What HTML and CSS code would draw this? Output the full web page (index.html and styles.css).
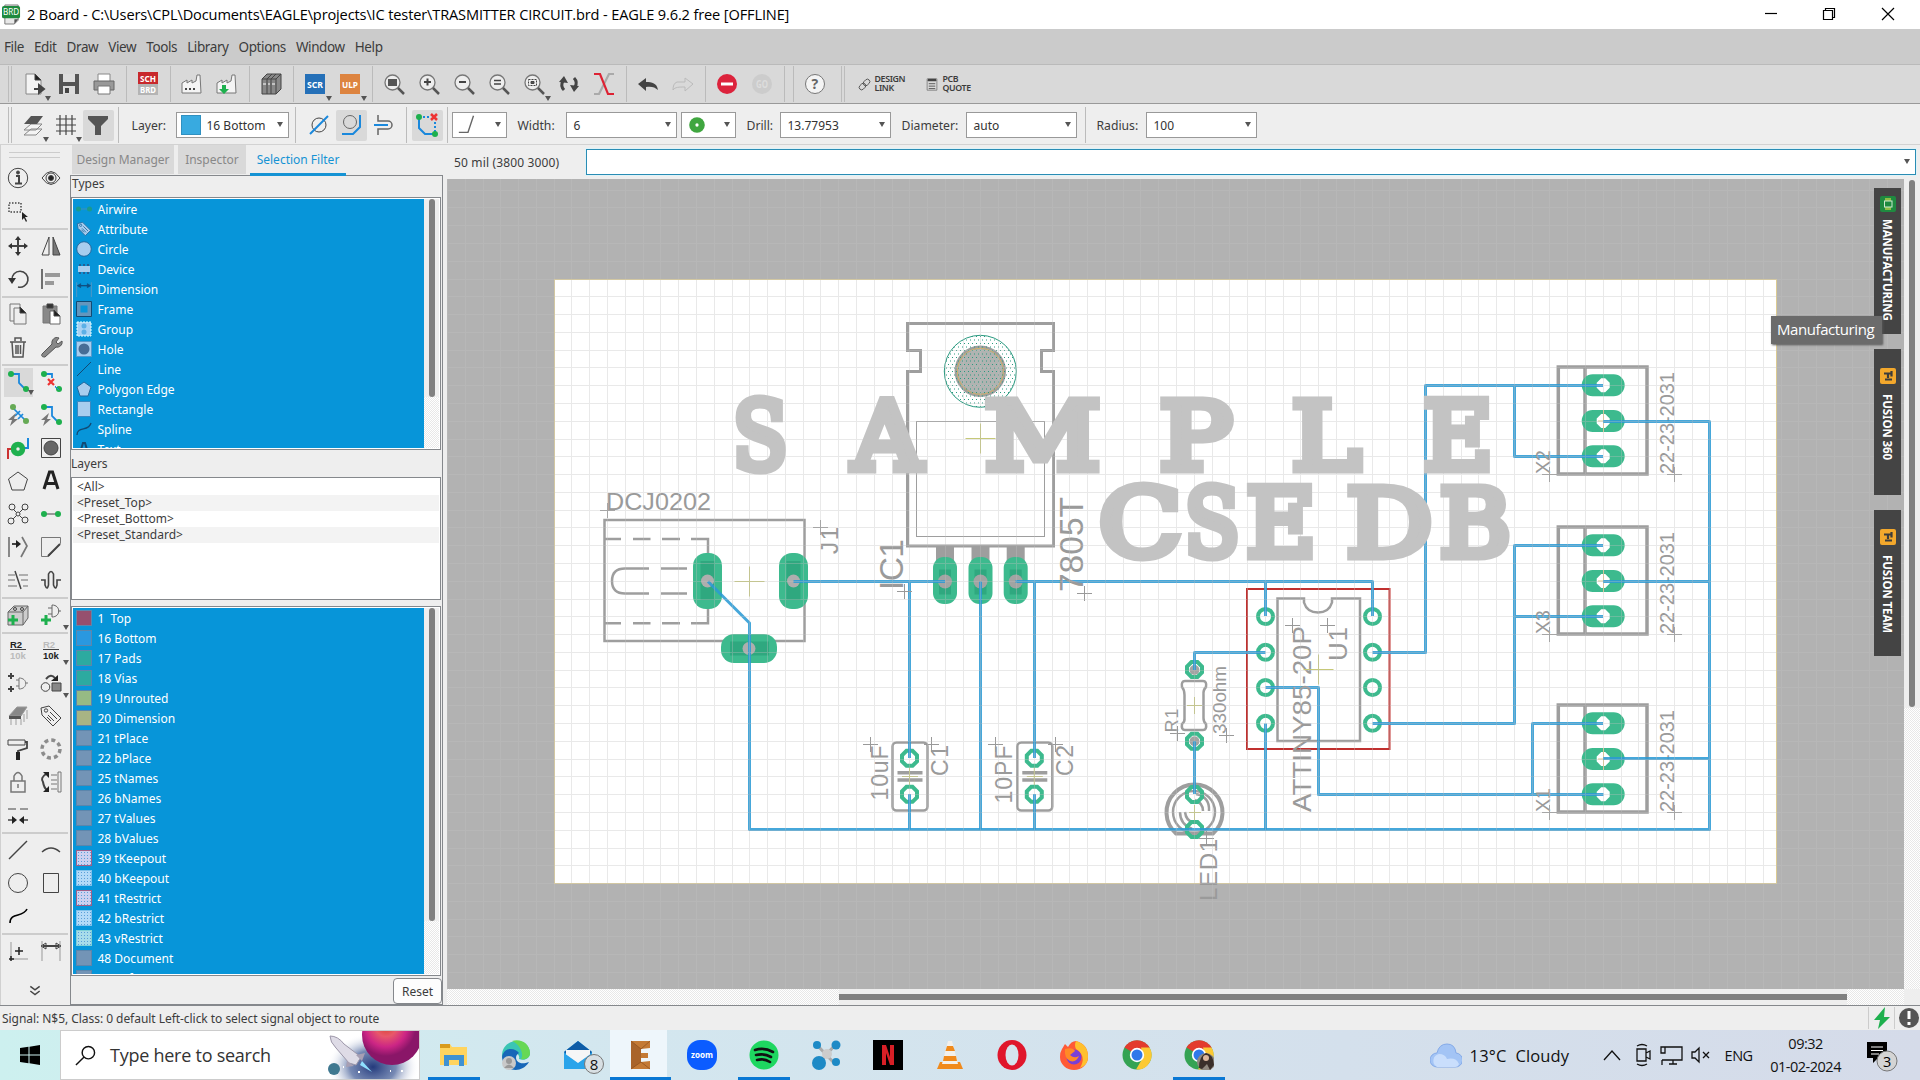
FILE: index.html
```html
<!DOCTYPE html>
<html lang="en">
<head>
<meta charset="utf-8">
<title>2 Board - EAGLE</title>
<link rel="stylesheet" href="styles.css">
</head>
<body>
<div class="app">
<header class="titlebar">
  <svg class="brd" viewBox="0 0 20 22"><path d="M3 1h14v16l-4 4H3z" fill="#e8e8e8" stroke="#777"/><path d="M17 16h-4v5z" fill="#555"/><rect width="19" height="13" y="2" rx="2" fill="#1e8a3e"/><text x="1" y="12" font-size="9" textLength="17" lengthAdjust="spacingAndGlyphs" fill="#fff">BRD</text></svg>
  <h1>2 Board - C:\Users\CPL\Documents\EAGLE\projects\IC tester\TRASMITTER CIRCUIT.brd - EAGLE 9.6.2 free [OFFLINE]</h1>
  <svg class="winctl" viewBox="0 0 150 28" fill="none" stroke="#000" stroke-width="1.2"><path d="M15 13.5h12"/><path d="M73.500 10.500h9v9h-9z M75.500 10.500v-2h9v9h-2"/><path d="M132 8l12 12M144 8l-12 12"/></svg>
</header>
<nav class="menubar"><span>File</span><span>Edit</span><span>Draw</span><span>View</span><span>Tools</span><span>Library</span><span>Options</span><span>Window</span><span>Help</span></nav>

<div class="toolbar main">
  <i class="grip"></i>
  <b class="dd"><svg viewBox="0 0 24 24"><path d="M4 2h9l6 6v14H4z" fill="#f4f4f4" stroke="#888"/><path d="M13 2v6h6z" fill="#222"/><path d="M12 17h8M17 13l5 4-5 4z" stroke-width="2" fill="#444"/></svg></b>
  <b><svg viewBox="0 0 24 24"><path d="M2 2h20v20H2z" fill="#555" stroke="none"/><path d="M6 2h12v8H6z M6 14h12v8H6z" fill="#ddd" stroke="none"/><path d="M8 16h4v5H8z" fill="#444" stroke="none"/></svg></b>
  <b><svg viewBox="0 0 24 24"><path d="M6 2h12v8H6z" fill="#fff" stroke="#888"/><path d="M2 9h20v9H2z" fill="#999" stroke="#666"/><path d="M6 14h12v8H6z" fill="#fff" stroke="#777"/></svg></b>
  <i class="sep"></i>
  <b><svg viewBox="0 0 24 24"><path d="M2 0h20v12H2z" fill="#c8282c" stroke="none"/><path d="M2 12h20v11H2z" fill="#b4b4b4" stroke="none"/><text class="tg" x="4" y="9.500" textLength="16" lengthAdjust="spacingAndGlyphs">SCH</text><text class="tg" x="4" y="21" textLength="16" lengthAdjust="spacingAndGlyphs">BRD</text></svg></b>
  <i class="sep"></i>
  <b><svg viewBox="0 0 24 24"><path d="M2 21V11l5-3v3l5-3v3l4-2 1-6h3l1 18z" fill="#f4f4f4" stroke="#777"/><path d="M5 17h12" stroke-dasharray="2 2" stroke-width="2"/></svg></b>
  <b><svg viewBox="0 0 24 24"><path d="M2 21V11l5-3v3l5-3v3l4-2 1-6h3l1 18z" fill="#f4f4f4" stroke="#777"/><path d="M7 13h4v4h3l-5 5-5-5h3z" fill="#1eb04e" stroke="none"/></svg></b>
  <i class="sep"></i>
  <b><svg viewBox="0 0 24 24"><path d="M3 7l5-5h14v15l-5 5H3z" fill="#888" stroke="#444"/><path d="M3 7h14v15M17 7l5-5M8 7v15M12 7v15M8 7l5-5M12 7l5-5" stroke="#444"/><path d="M4 12h3M9 12h2M13 12h3" stroke="#fff"/></svg></b>
  <i class="sep"></i>
  <b class="dd"><svg viewBox="0 0 24 24"><path d="M2 2h20v20H2z" fill="#2570b8" stroke="none"/><text class="tg" x="4" y="16" textLength="16" lengthAdjust="spacingAndGlyphs">SCR</text></svg></b>
  <b class="dd"><svg viewBox="0 0 24 24"><path d="M2 2h20v20H2z" fill="#dd8440" stroke="none"/><text class="tg" x="4" y="16" textLength="16" lengthAdjust="spacingAndGlyphs">ULP</text></svg></b>
  <i class="sep"></i>
  <b><svg viewBox="0 0 24 24"><use href="#lens"/><path d="M6 7h9v7H6z" fill="#555" stroke="none"/></svg></b>
  <b><svg viewBox="0 0 24 24"><use href="#lens"/><path d="M7 10h7M10.500 6.500v7" stroke-width="2"/></svg></b>
  <b><svg viewBox="0 0 24 24"><use href="#lens"/><path d="M7 10h7" stroke-width="2"/></svg></b>
  <b><svg viewBox="0 0 24 24"><use href="#lens"/><path d="M7 8.500h7M7 12h7" stroke-width="1.500"/></svg></b>
  <b class="dd"><svg viewBox="0 0 24 24"><use href="#lens"/><path d="M6.500 7.500h8v6h-8z" stroke-dasharray="2 1"/><path d="M9 9.500h3v2H9z" fill="#555"/></svg></b>
  <b><svg viewBox="0 0 24 24"><path d="M7 18a7.500 7.500 0 0 1-1-9M17 6a7.500 7.500 0 0 1 1 9" stroke-width="3"/><path d="M2 10l5-6 4 7zM22 14l-5 6-4-7z" fill="#444" stroke="none"/></svg></b>
  <b><svg viewBox="0 0 24 24" stroke-width="2.200"><path d="M22 2h-5L7 22H2" stroke="#aaa"/><path d="M2 2h6l8 20h6" stroke="#d23"/></svg></b>
  <i class="sep"></i>
  <b><svg viewBox="0 0 24 24"><path d="M2 12l8-6v4c6 0 11 1 12 8-3-3-7-4-12-3v4z" fill="#444" stroke="none"/></svg></b>
  <b><svg viewBox="0 0 24 24"><path d="M22 12l-8-6v4H6c-3 1-4 4-4 8 2-3 6-3 12-3v4z" stroke="#bbb"/></svg></b>
  <i class="sep"></i>
  <b><svg viewBox="0 0 24 24"><circle cx="12" cy="12" r="10" fill="#dc233c" stroke="none"/><path d="M6 12h12" stroke="#fff" stroke-width="3"/></svg></b>
  <b><svg viewBox="0 0 24 24"><circle cx="12" cy="12" r="10" fill="#ccc" stroke="none"/><text x="6" y="16" font-size="10" font-weight="bold" textLength="12" lengthAdjust="spacingAndGlyphs" fill="#ddd" stroke="none">GO</text></svg></b>
  <i class="sep"></i><i class="sep"></i>
  <b><svg viewBox="0 0 24 24"><circle cx="12" cy="12" r="9.500" fill="#f4f4f4" stroke="#777"/><text x="8.500" y="17" font-size="14" font-weight="bold" fill="#666" stroke="none">?</text></svg></b>
  <i class="grip g2"></i>
  <svg class="tiny" viewBox="0 0 16 16"><g transform="rotate(-45 8 8)"><rect x="0" y="5" width="9" height="6" rx="3"/><rect x="7" y="5" width="9" height="6" rx="3"/></g></svg><span class="two">DESIGN<br>LINK</span>
  <svg class="tiny pq" viewBox="0 0 16 16"><path d="M2 1h12v14H2z M2 3h12" stroke="#777"/><path d="M3 2.500h10" stroke-width="3"/><path d="M4 7h8M4 10h8M4 13h8"/></svg><span class="two">PCB<br>QUOTE</span>
</div>

<div class="toolbar params">
  <i class="grip"></i>
  <b class="dd w33"><svg viewBox="0 0 24 24"><path d="M3 22l7-6h11l-6 6z M3 17l7-6h11l-6 6z" fill="#f4f4f4" stroke="#888"/><path d="M3 11l7-8h12l-6 8z" fill="#555" stroke="none"/></svg></b>
  <b class="dd w33"><svg viewBox="0 0 24 24"><path d="M2 6h20M2 12h20M2 18h20M6 2v20M12 2v20M18 2v20" stroke="#444" stroke-width="1.200"/></svg></b>
  <b class="on"><svg viewBox="0 0 24 24"><path d="M2 3h20v3l-7 7v9H9v-9L2 6z" fill="#555" stroke="none"/></svg></b>
  <i class="sep"></i><label class="l1">Layer:</label>
  <div class="combo c1"><em></em>16 Bottom</div>
  <i class="sep s2"></i>
  <b><svg viewBox="0 0 24 24"><circle cx="12" cy="12" r="7"/><path d="M3 21L21 3" stroke="#1a88dc" stroke-width="2"/></svg></b>
  <b class="on"><svg viewBox="0 0 24 24"><circle cx="11" cy="9" r="6.500" stroke="#666"/><path d="M3 21h11l7-7V2" stroke="#1a88dc" stroke-width="2"/></svg></b>
  <b><svg viewBox="0 0 24 24"><path d="M6 2v6h10a4 4 0 0 1 0 8H6v6" stroke="#666" stroke-width="1.500"/><path d="M2 12h14" stroke="#1a88dc" stroke-width="2"/></svg></b>
  <i class="sep s3"></i>
  <b class="on"><svg viewBox="0 0 24 24"><path d="M4 4v11l6 6h10" stroke="#1a88dc" stroke-width="2"/><path d="M8 4h6M20 9v10" stroke="#1a88dc" stroke-width="2" stroke-dasharray="2 2"/><path d="M16 1l6 6M22 1l-6 6" stroke="#e33" stroke-width="2.500"/><circle cx="4" cy="4" r="3" fill="#1eb04e" stroke="none"/><circle cx="20" cy="21" r="3" fill="#1eb04e" stroke="none"/></svg></b>
  <i class="sep s4"></i>
  <div class="combo c2"><svg viewBox="0 0 24 24"><path d="M2 20h10l6-18" stroke="#666" stroke-width="1.500"/></svg></div><label class="l2">Width:</label>
  <div class="combo c3">6</div>
  <div class="combo c4"><svg viewBox="0 0 24 24"><circle cx="12" cy="12" r="8.500" fill="#3fa63f" stroke="none"/><circle cx="12" cy="12" r="1.800" fill="#fff" stroke="none"/></svg></div>
  <label class="l3">Drill:</label><div class="combo c3">13.77953</div>
  <label class="l4">Diameter:</label><div class="combo c3">auto</div>
  <i class="sep s5"></i><label class="l5">Radius:</label><div class="combo c3">100</div>
</div>

<main class="work">
<aside class="palette">
  <i class="pgrip"></i>
  <b><svg viewBox="0 0 24 24"><circle cx="12" cy="12" r="9.700"/><path d="M10 10h3v7M9 17.500h7" stroke-width="2"/><circle cx="12" cy="6.500" r="1.500" fill="#444"/></svg></b>
  <b><svg viewBox="0 0 24 24"><path d="M3 12q9-13 18 0-9 13-18 0z"/><circle cx="12" cy="12" r="5"/><circle cx="12" cy="12" r="2.500" fill="#222"/></svg></b>
  <b><svg viewBox="0 0 24 24"><path d="M3 4h12v9H3z" stroke-dasharray="1.500 1.500" stroke-width="1.500"/><path d="M16 13v8l2-2 2 4 1-1-2-4h3z" fill="#222" stroke="none"/></svg></b><b></b>
  <hr>
  <b><svg viewBox="0 0 24 24"><path d="M12 4v16M4 12h16" stroke-width="2"/><path d="M12 2l3 4H9zM12 22l3-4H9zM2 12l4-3v6zM22 12l-4-3v6z" fill="#333" stroke="none"/></svg></b>
  <b><svg viewBox="0 0 24 24"><path d="M10 3v18H3z"/><path d="M14 3v18h7z" fill="#777"/></svg></b>
  <b><svg viewBox="0 0 24 24"><path d="M6 13a8 8 0 1 1 6 7" stroke-width="1.600"/><path d="M2 11h8l-4 6z" fill="#333" stroke="none"/></svg></b>
  <b><svg viewBox="0 0 24 24"><path d="M3 2v20" stroke-width="1.500"/><path d="M6 8h15M6 16h9" stroke="#999" stroke-width="4"/></svg></b>
  <hr>
  <b><svg viewBox="0 0 24 24"><path d="M4 2h10v4M4 2v17h4M8 6h7l5 5v11H8z" stroke="#777"/><path d="M14 5v6h6z" fill="#222"/></svg></b>
  <b><svg viewBox="0 0 24 24"><path d="M4 4h14v17H4z" fill="#888" stroke="#777"/><path d="M8 2h6v4H8z" fill="#333"/><path d="M11 9h5l5 5v8H11z" fill="#fff" stroke="#666"/><path d="M15 8v6h6z" fill="#222"/></svg></b>
  <b><svg viewBox="0 0 24 24"><path d="M4 7h16M6 7l1 15h10l1-15M9 6V3h6v3M10 10v9M12 10v9M14.500 10v9" stroke-width="1.500" stroke="#555"/></svg></b>
  <b><svg viewBox="0 0 24 24"><path d="M3 19L13 9c-1-4 3-8 7-6l-3 4 2 2 4-3c1 4-3 7-6 6L6 22c-3 0-4-1-3-3z" fill="#888" stroke="#555"/></svg></b>
  <hr>
  <b class="on dd"><svg viewBox="0 0 24 24"><use href="#rt"/></svg></b>
  <b><svg viewBox="0 0 24 24"><use href="#rt"/><path d="M8 8h10v9H8z" fill="#eee" stroke="none"/><path d="M9 9l6 6M15 9l-6 6" stroke="#e33" stroke-width="2.200"/><path d="M16 16l4 4" stroke="#1a88dc"/></svg></b>
  <b><svg viewBox="0 0 24 24"><path d="M7 5l13 13M9 13l5-5M12 16l5-5" stroke="#1a88dc" stroke-width="1.700"/><circle cx="7" cy="4" r="3" fill="#6a5" stroke="none"/><circle cx="20" cy="18" r="3" fill="#6a5" stroke="none"/><use href="#bolt"/></svg></b>
  <b><svg viewBox="0 0 24 24"><use href="#rt"/><use href="#bolt"/></svg></b>
  <b><svg viewBox="0 0 24 24"><path d="M2 23V13h7" stroke="#c33" stroke-width="2"/><path d="M22 2v10h-6" stroke="#1a88dc" stroke-width="2"/><circle cx="12" cy="13" r="4.500" stroke="#1eb04e" stroke-width="5.500"/></svg></b>
  <b><svg viewBox="0 0 24 24"><path d="M2.500 2.500h19v19h-19z"/><circle cx="12" cy="12" r="7" fill="#666"/></svg></b>
  <b><svg viewBox="0 0 24 24"><path d="M12 3l9.500 7-3.500 11H6L2.500 10z"/></svg></b>
  <b><svg viewBox="0 0 24 24"><path d="M5 20L10.500 3h3L19 20M7.500 14.500h9" stroke="#222" stroke-width="3"/></svg></b>
  <b><svg viewBox="0 0 24 24" stroke="#666"><path d="M5 5l14 14M19 5L5 19"/><g fill="#eee"><circle cx="6" cy="5" r="3"/><circle cx="19" cy="5" r="3"/><circle cx="5" cy="19" r="3"/><circle cx="19" cy="18" r="3"/><circle cx="12" cy="12" r="2"/></g></svg></b>
  <b><svg viewBox="0 0 24 24"><path d="M4 12h16" stroke="#999" stroke-width="2"/><circle cx="5" cy="12" r="3" fill="#1eb04e" stroke="none"/><circle cx="19" cy="12" r="3" fill="#1eb04e" stroke="none"/></svg></b>
  <b><svg viewBox="0 0 24 24"><path d="M3 2v20M16 2l5 9-6 11" stroke="#777" stroke-width="1.700"/><path d="M6 9h6" stroke-width="2"/><path d="M10 5l5 4-5 4z" fill="#222" stroke="none"/></svg></b>
  <b><svg viewBox="0 0 24 24"><path d="M2.500 2.500h19v6l-12 13h-7z" stroke="#777"/><path d="M9 21L21 9" stroke-width="2"/></svg></b>
  <b><svg viewBox="0 0 24 24"><path d="M2 7h7M2 12h7M2 18h9M13 7h9M15 12h7M17 18h5" stroke="#999" stroke-width="1.700"/><path d="M9 3l6 18" stroke-width="1.500"/></svg></b>
  <b><svg viewBox="0 0 24 24"><path d="M2 12h4v5q2 6 3.500 0V6q2.500-5 5 0v11q2 6 3.500 0v-5h4" stroke-width="1.600"/></svg></b>
  <hr>
  <b><svg viewBox="0 0 24 24"><path d="M2 9l6-6h14v12l-5 7H2z" fill="#ccc" stroke="#666"/><path d="M17 9h-15M17 22V9l5-6" stroke="#666"/><circle cx="9" cy="6" r="1.500"/><circle cx="16" cy="6" r="1.500"/><use href="#plus"/></svg></b>
  <b class="dd"><svg viewBox="0 0 24 24"><path d="M13 2v12c9 0 9-12 0-12zM9 5h4M9 11h4M19 8h3" stroke="#666"/><use href="#plus"/></svg></b>
  <hr>
  <b><svg viewBox="0 0 24 24"><text class="r2" x="4" y="10" fill="#222">R2</text><text class="r2" x="4" y="21" fill="#bbb">10k</text><path d="M4 11.500h16"/></svg></b>
  <b class="dd"><svg viewBox="0 0 24 24"><text class="r2" x="4" y="10" fill="#bbb">R2</text><text class="r2" x="4" y="21" fill="#222">10k</text><path d="M4 11.500h16"/></svg></b>
  <b><svg viewBox="0 0 24 24"><path d="M2 5h6M5 2v6M2 18h6M5 15v6" stroke-width="2"/><path d="M13 7v11c9 0 9-11 0-11zM10 9h3M10 15h3M19 12h3" stroke="#777"/></svg></b>
  <b class="dd"><svg viewBox="0 0 24 24"><circle cx="6.500" cy="16" r="4.300"/><path d="M13 12h9v8h-9z" fill="#888"/><path d="M7 8q5-6 9-1" stroke-width="2"/><path d="M19 4v6h-7z" fill="#222" stroke="none"/></svg></b>
  <b><svg viewBox="0 0 24 24"><path d="M3 12l8-9h10l-6 9z" fill="#888" stroke="#999"/><path d="M3 12h12v3H3z" fill="#555" stroke="none"/><path d="M5 15v6M10 15v6M15 15v6M18 10v8M21 6v9" stroke="#bbb" stroke-width="1.500"/></svg></b>
  <b><svg viewBox="0 0 24 24"><use href="#tag"/></svg></b>
  <b><svg viewBox="0 0 24 24"><path d="M2 3h17v5H2z"/><path d="M19 5h2v6l-9 3v2" stroke-width="1.800"/><path d="M12 15v8" stroke="#222" stroke-width="4"/></svg></b>
  <b><svg viewBox="0 0 24 24"><circle cx="12" cy="12" r="9" stroke="#8c8c8c" stroke-width="3.500" stroke-dasharray="4 3.070"/></svg></b>
  <b><svg viewBox="0 0 24 24"><path d="M5 11h14v11H5zM8 11V6q4-7 8 0v5M12 14v4" stroke="#777" stroke-width="1.500"/></svg></b>
  <b><svg viewBox="0 0 24 24"><path d="M7 4q-6 4-3 8 1 6 4 8" stroke-width="2"/><path d="M4 2h6v6zM4 22h6v-6z" fill="#222" stroke="none"/><path d="M19 2h3v20h-3zM12 5h6M12 10h6M12 14h6M12 19h6" stroke="#777"/></svg></b>
  <b><svg viewBox="0 0 24 24"><path d="M2 6h8M14 6h8" stroke="#999" stroke-width="2"/><path d="M2 17h6M16 17h6" stroke-width="1.500"/><path d="M6 13l5 4-5 4zM18 13l-5 4 5 4z" fill="#222" stroke="none"/></svg></b><b></b>
  <hr>
  <b><svg viewBox="0 0 24 24"><path d="M3 21L21 3" stroke-width="1.400"/></svg></b>
  <b><svg viewBox="0 0 24 24"><path d="M3 14q9-8 18 0" stroke-width="1.400"/></svg></b>
  <b><svg viewBox="0 0 24 24"><circle cx="12" cy="12" r="9.500"/></svg></b>
  <b><svg viewBox="0 0 24 24"><path d="M4.500 2.500h15v19h-15z"/></svg></b>
  <b><svg viewBox="0 0 24 24"><path d="M4 19c0-11 13-5 17-14" stroke="#000" stroke-width="1.600"/></svg></b><b></b>
  <hr>
  <b><svg viewBox="0 0 24 24"><path d="M5 3v17h17" stroke="#999"/><path d="M9 12h8M13 8v8M3 20h5M5 17v5" stroke="#222" stroke-width="1.500"/></svg></b>
  <b><svg viewBox="0 0 24 24"><path d="M3 2v20M21 2v20" stroke="#999"/><use href="#dim"/></svg></b>
  <svg class="chev" viewBox="0 0 12 10"><path d="M2 1l4 3 4-3M2 5l4 3 4-3" stroke-width="1.300"/></svg>
</aside>

<section class="panel">
  <div class="tabs"><span class="t1">Design Manager</span><span class="t2">Inspector</span><span class="t3">Selection Filter</span></div>
  <div class="pbody">
    <div class="cap">Types</div>
    <div class="list types">
      <ul>
        <li><svg viewBox="0 0 16 16"><path d="M3 8h10" stroke="#3f8fb8"/><circle cx="2.500" cy="8" r="2.500" fill="#1a9a8c"/><circle cx="13.500" cy="8" r="2.500" fill="#1a9a8c"/></svg>Airwire</li>
        <li><svg viewBox="0 0 24 24"><g fill="#a8cdee" stroke="#24699e" stroke-width="1.300"><use href="#tag"/></g></svg>Attribute</li>
        <li><svg viewBox="0 0 16 16"><circle cx="8" cy="8" r="7.300" fill="#a8cdee" stroke="#24699e"/></svg>Circle</li>
        <li><svg viewBox="0 0 16 16"><path d="M4 3v10M8 3v10M12 3v10" stroke="#235f96" stroke-width="2"/><path d="M2 5h12v6H2z" fill="#a8cdee"/></svg>Device</li>
        <li><svg viewBox="0 0 24 24"><path d="M1 2v22M23 2v22" stroke="#4f97c6" stroke-width="1.500"/><g stroke="#114f80" fill="#114f80"><use href="#dim"/></g></svg>Dimension</li>
        <li><svg viewBox="0 0 16 16"><path d="M2.500 2.500h11v11h-11z" stroke="#6496bd" stroke-width="4"/><path d="M.5 .5h15v15H.5z" stroke="#124a74"/></svg>Frame</li>
        <li><svg viewBox="0 0 16 16"><path d="M1 1h14v14H1z" fill="#a8d2f4" stroke="#dff" stroke-dasharray="2 1"/><circle cx="8" cy="5" r="2.500" fill="#5cb0e6"/><circle cx="8" cy="11" r="2.500" fill="#5cb0e6"/></svg>Group</li>
        <li><svg viewBox="0 0 16 16"><path d="M.5 .5h15v15H.5z" fill="#a8cdee" stroke="#5599cc"/><circle cx="8" cy="8" r="5.500" fill="#476d96"/></svg>Hole</li>
        <li><svg viewBox="0 0 16 16"><path d="M1 15L15 1" stroke="#124a74"/></svg>Line</li>
        <li><svg viewBox="0 0 16 16"><path d="M8 1l7 5-3 9H4L1 6z" fill="#a8cdee" stroke="#24699e"/></svg>Polygon Edge</li>
        <li><svg viewBox="0 0 16 16"><path d="M1.500 .5h13v15h-13z" fill="#a8cdee" stroke="#3c88c0"/></svg>Rectangle</li>
        <li><svg viewBox="0 0 16 16"><path d="M1 14c0-9 12-3 14-12" stroke="#124a74" stroke-width="1.300"/></svg>Spline</li>
        <li><svg viewBox="0 0 16 16"><path d="M3 15L7 2h2l4 13" stroke="#124a74" stroke-width="2"/></svg>Text</li>
      </ul>
      <div class="sb"></div>
    </div>
    <div class="cap c-lay">Layers</div>
    <div class="presets"><p>&lt;All&gt;</p><p>&lt;Preset_Top&gt;</p><p>&lt;Preset_Bottom&gt;</p><p>&lt;Preset_Standard&gt;</p></div>
    <div class="list layers">
      <ul>
        <li><em class="top"></em>1&nbsp; Top</li><li><em class="bot"></em>16 Bottom</li><li><em class="pad"></em>17 Pads</li><li><em class="pad"></em>18 Vias</li><li><em class="unr"></em>19 Unrouted</li><li><em class="dmn"></em>20 Dimension</li><li><em></em>21 tPlace</li><li><em></em>22 bPlace</li><li><em></em>25 tNames</li><li><em></em>26 bNames</li><li><em></em>27 tValues</li><li><em></em>28 bValues</li><li><em class="dots rd"></em>39 tKeepout</li><li><em class="dots"></em>40 bKeepout</li><li><em class="dots rd"></em>41 tRestrict</li><li><em class="dots"></em>42 bRestrict</li><li><em class="dots gr"></em>43 vRestrict</li><li><em></em>48 Document</li><li><em></em>49 Reference</li>
      </ul>
      <div class="sb"></div>
    </div>
    <button class="reset">Reset</button>
  </div>
</section>

<section class="editor">
  <div class="cmd"><span>50 mil (3800 3000)</span><div class="combo input"></div></div>
  <div class="stage">
  <svg class="board" viewBox="447 179 1457 810">
    <defs>
      <pattern id="dot" width="4" height="7" patternUnits="userSpaceOnUse"><path d="M0 0h1v1H0zM2 3.500h1v1H2z" fill="#2a9a80"/></pattern>
      <g id="x"><path d="M-7.500 0h15M0-7.500v15" stroke="#999" stroke-width="1" fill="none"/></g>
      <g id="y"><path d="M-15 0h30M0-15v30" stroke="#c6c878" stroke-width="1" fill="none"/></g>
      <g id="ring"><circle r="7.500" fill="none" stroke="#3dba8e" stroke-width="4"/></g>
      <g id="oct"><path d="M-3-7.500h6L7.500-3v6L3 7.500h-6L-7.500 3v-6z" fill="none" stroke="#3dba8e" stroke-width="4"/></g>
      <g id="cpad"><path fill-rule="evenodd" d="M-10.500-11h21a11 11 0 0 1 0 22h-21a11 11 0 0 1 0-22zM-2-7L-6.500-2.500v5l4.500 4.500h4L6.500 2.500v-5L2-7z" fill="#3dba8e"/></g>
      <g id="conn">
        <g fill="none" stroke="#9e9e9e" stroke-width="3.500"><rect x="1558.300" y="367" width="88.700" height="107"/><path d="M1585 367v107"/></g>
        <use href="#cpad" x="1603.200" y="385.300"/><use href="#cpad" x="1603.200" y="421"/><use href="#cpad" x="1603.200" y="456.300"/>
        <path d="M1598 421h10M1603.500 410v22" stroke="#dcc98a" fill="none"/>
        <text class="v" font-size="20" textLength="102" transform="translate(1673.500 474)rotate(-90)">22-23-2031</text>
        <use href="#x" x="1549.500" y="474.500"/><use href="#x" x="1674.500" y="474.500"/>
      </g>
      <g id="cap">
        <rect x="892.500" y="742.500" width="35" height="68" rx="4" fill="none" stroke="#9e9e9e" stroke-width="2.500"/>
        <path d="M897.500 772.700h25M897.500 780h25" stroke="#9e9e9e" stroke-width="3.500"/><path d="M902 776.500h16M909.500 766v20" stroke="#c6c878"/>
        <use href="#oct" x="909.500" y="758.300"/><use href="#oct" x="909.500" y="794.300"/>
      </g>
      <g id="lead"><path d="M-9-36H9v20H-9z" fill="#9e9e9e"/><rect x="-12" y="-24.500" width="24" height="47" rx="11" fill="#3dba8e"/><path d="M-6-12H6v25H-6z" fill="#2fa87f"/><circle r="7" fill="#a2a4a3"/></g>
      <g id="jpad"><rect x="-14.500" y="-28" width="29" height="56" rx="13" fill="#3dba8e"/><path d="M-7-20H7v39H-7z" fill="#2fa87f"/><circle r="6.500" fill="#aeaeae"/></g>
    </defs>
    <rect x="447" y="179" width="1457" height="810" fill="#b2b2b2"/>
    <rect x="554.500" y="279.500" width="1222" height="604" fill="#fff" stroke="#dccb92"/>
    <g fill="none" stroke="#9e9e9e" stroke-width="2.500">
      <rect x="604.500" y="520" width="200" height="121"/>
      <path d="M604 539h17M633 539h17.500M662 539h18M691 539h17v18M604 623.300h17M633 623.300h17.500M662 623.300h18M691 623.300h17v-20M649 568.500h-24q-13 0-13 12.500t13 12.500h24M661 568.500h26M661 593.500h26"/>
      <path stroke-width="3" d="M907.500 323.500h146v27h-12v21h12v174.500h-146v-174.500h13v-21h-13z"/>
      <rect x="916.500" y="421.500" width="128" height="115" stroke-width="1"/>
      <path d="M1304 598.500h-26.500v142.500h82.500v-142.500h-28v4q-3 10-14 10t-14-10z"/>
    </g>
    <rect x="1247" y="589" width="142.500" height="160" fill="none" stroke="#c0302f" stroke-width="2"/>
    <g><circle cx="980.300" cy="371.300" r="24" fill="#b0b3b1" stroke="#9e9e9e" stroke-width="3.500"/><circle cx="980.300" cy="371.300" r="23" fill="none" stroke="#d1b36a"/><circle cx="980.300" cy="371.300" r="36" fill="url(#dot)" stroke="#2a9a80"/></g>
    <g fill="none" stroke="#9e9e9e" stroke-width="2.500">
      <path d="M1185 681h18q4 0 3 6-3 3-2.500 8v23q0 4 2.500 6 1 6-3 6h-18q-4 0-3-6 3-2 2.500-6v-23q0-5-2.500-8-1-6 3-6z"/>
      <path d="M1176 833.500a28 28 0 1 1 37 0z" stroke-width="4"/><circle cx="1194" cy="812" r="21"/>
      <path d="M1196 794q14 3 13 17M1195 800q8 3 8 11M1180 812q0 12 12 17M1185 812q1 9 9 11"/>
    </g>
    <use href="#jpad" x="707.500" y="581"/><use href="#jpad" x="793.500" y="581"/><use href="#jpad" transform="translate(749 648.500)rotate(90)"/>
    <use href="#lead" x="945" y="581.500"/><use href="#lead" x="980.500" y="581.500"/><use href="#lead" x="1015.700" y="581.500"/>
    <use href="#conn"/><use href="#conn" y="160"/><use href="#conn" y="338"/>
    <use href="#cap"/><use href="#cap" x="124.800"/>
    <use href="#ring" x="1265.500" y="616.500"/><use href="#ring" x="1265.500" y="652.300"/><use href="#ring" x="1265.500" y="687.500"/><use href="#ring" x="1265.500" y="723.300"/>
    <use href="#ring" x="1372.500" y="616.500"/><use href="#ring" x="1372.500" y="652.300"/><use href="#ring" x="1372.500" y="687.500"/><use href="#ring" x="1372.500" y="723.300"/>
    <g fill="#a2a4a3"><circle cx="1194.500" cy="670" r="5"/><circle cx="1194.500" cy="741.300" r="5"/></g>
    <use href="#oct" x="1194.500" y="669.500"/><use href="#oct" x="1194.500" y="741.300"/><use href="#oct" x="1194.500" y="794.500"/><use href="#oct" x="1194.500" y="829.500"/>
    <g class="trace">
      <path d="M793.500 581.500H945M1015.500 581.500H1372.500V616M1265.500 581.500V616M909.500 581.500V758M1034.500 581.500V758M980.500 581.500V829.500M909.500 794V829.500M1034.500 794V829.500"/>
      <path d="M708 581.500L749.500 623V829.500H1709.500V421.500H1603M1603 581.500h106.500M1603 758.500h106.500"/>
      <path d="M1265.500 652.500h-71V670M1194.500 741v53M1265.500 723.500v106M1265.500 687.500h53v107h285M1532.500 794.500v-71H1603"/>
      <path d="M1372.500 652.500h53v-267H1603M1514.500 385.500v71H1603M1372.500 723.500h142v-178H1603M1514.500 616.500H1603"/>
    </g>
    <g class="vt">
      <text x="606" y="509.700" font-size="23.500" textLength="105" lengthAdjust="spacingAndGlyphs">DCJ0202</text>
      <text font-size="24" textLength="27" transform="translate(838 554)rotate(-90)">J1</text>
      <text font-size="33.500" textLength="51" transform="translate(903 590)rotate(-90)">IC1</text>
      <text font-size="33.500" textLength="95" transform="translate(1083 592)rotate(-90)">7805T</text>
      <text font-size="23" textLength="55" transform="translate(888 800.500)rotate(-90)">10uF</text>
      <text font-size="23" textLength="31" transform="translate(948 776)rotate(-90)">C1</text>
      <text font-size="23" textLength="58" transform="translate(1012 803.500)rotate(-90)">10PF</text>
      <text font-size="23" textLength="31" transform="translate(1073 776)rotate(-90)">C2</text>
      <text font-size="18" textLength="24" transform="translate(1177.500 732.500)rotate(-90)">R1</text>
      <text font-size="18.500" textLength="68" lengthAdjust="spacingAndGlyphs" transform="translate(1226 734)rotate(-90)">330ohm</text>
      <text font-size="24" textLength="62" transform="translate(1217 901)rotate(-90)">LED1</text>
      <text font-size="26" textLength="186" lengthAdjust="spacingAndGlyphs" transform="translate(1310.500 812)rotate(-90)">ATTINY85-20P</text>
      <text font-size="26" textLength="34" transform="translate(1346.500 661)rotate(-90)">U1</text>
      <text font-size="20" textLength="24" transform="translate(1549.500 474)rotate(-90)">X2</text>
      <text font-size="20" textLength="24" transform="translate(1549.500 634)rotate(-90)">X3</text>
      <text font-size="20" textLength="24" transform="translate(1549.500 812)rotate(-90)">X1</text>
    </g>
    <use href="#x" x="607.500" y="510.500"/><use href="#x" x="820.500" y="527.500"/><use href="#x" x="904.500" y="591.500"/><use href="#x" x="1084.500" y="593.500"/><use href="#x" x="870.500" y="744.500"/><use href="#x" x="931.500" y="744.500"/><use href="#x" x="995.500" y="744.500"/><use href="#x" x="1055.500" y="744.500"/><use href="#x" x="1177.500" y="733.500"/><use href="#x" x="1226.500" y="735.500"/><use href="#x" x="1206.500" y="838.500"/><use href="#x" x="1292.500" y="625.500"/><use href="#x" x="1327.500" y="625.500"/>
    <use href="#y" x="749.500" y="581.500"/><use href="#y" x="980.500" y="438.500"/><use href="#y" x="1318.500" y="669.500"/>
    <path d="M1187 705.500h15M1194.500 697v17M1189 812.500h12M1194.500 805v15" stroke="#c6c878"/>
    <path id="grid" fill="none" stroke="rgba(192,192,192,.35)" shape-rendering="crispEdges"/>
    <g class="mark" font-size="93">
      <text x="732.700" y="469" textLength="55.100" lengthAdjust="spacingAndGlyphs">S</text><text x="852.600" y="469" textLength="69.300" lengthAdjust="spacingAndGlyphs">A</text><text x="984.700" y="469" textLength="115.500" lengthAdjust="spacingAndGlyphs">M</text><text x="1159.500" y="469" textLength="73" lengthAdjust="spacingAndGlyphs">P</text><text x="1291.800" y="469" textLength="69" lengthAdjust="spacingAndGlyphs">L</text><text x="1423.300" y="469" textLength="69.600" lengthAdjust="spacingAndGlyphs">E</text>
      <text x="1099" y="556" textLength="82.600" lengthAdjust="spacingAndGlyphs">C</text><text x="1184.500" y="556" textLength="55.400" lengthAdjust="spacingAndGlyphs">S</text><text x="1246.300" y="556" textLength="69.600" lengthAdjust="spacingAndGlyphs">E</text><text x="1346.600" y="556" textLength="85.900" lengthAdjust="spacingAndGlyphs">D</text><text x="1439.700" y="556" textLength="71" lengthAdjust="spacingAndGlyphs">B</text>
    </g>
  </svg>
  <div class="side">
    <div><svg viewBox="0 0 16 16"><rect width="16" height="16" rx="2" fill="#1f8a40"/><path d="M6 2v12M8 2v12M10 2v12" stroke="#d8e04a" stroke-width="1.200"/><rect x="4.500" y="5" width="7.500" height="6" fill="#1f8a40" stroke="#cfe8d0"/></svg><span>MANUFACTURING</span></div>
    <div class="fu"><svg viewBox="0 0 16 16"><use href="#fusion"/></svg><span>FUSION 360</span></div>
    <div class="fu"><svg viewBox="0 0 16 16"><use href="#fusion"/></svg><span>FUSION TEAM</span></div>
  </div>
  <div class="tip">Manufacturing</div>
  <div class="vs"></div><div class="hs"></div><div class="corner"></div>
  </div>
</section>
</main>

<footer class="status"><span>Signal: N$5, Class: 0 default Left-click to select signal object to route</span>
  <svg viewBox="0 0 52 24"><path d="M.5 1v22M26.500 1v22" stroke="#ccc"/><path d="M15 1L4 14h6L8 23l12-12h-6z" fill="#1eb04e" stroke="none" transform="translate(2 0)"/><circle cx="41" cy="12" r="10" fill="#555" stroke="none"/><path d="M41 5v8M41 16v3" stroke="#fff" stroke-width="3"/></svg></footer>

<footer class="taskbar">
  <div class="start"><svg viewBox="0 0 20 20"><path d="M0 3l8.500-1.200v7.700H0zM9.500 1.700L20 0v9.500H9.500zM0 10.500h8.500v7.700L0 17zM9.500 10.500H20V20L9.500 18.300z" fill="#000" stroke="none"/></svg></div>
  <div class="search"><svg viewBox="0 0 22 22"><circle cx="14" cy="8" r="6.500" stroke="#111" stroke-width="1.500"/><path d="M9.500 12.500L1 21" stroke="#111" stroke-width="1.500"/></svg><span>Type here to search</span>
    <svg class="space" viewBox="0 0 96 48"><defs><radialGradient id="sky"><stop offset="0" stop-color="#243a7c"/><stop offset=".5" stop-color="#4a639b" stop-opacity=".75"/><stop offset="1" stop-color="#fff" stop-opacity="0"/></radialGradient><radialGradient id="pl" cx=".4" cy=".35"><stop offset="0" stop-color="#d8432e"/><stop offset=".35" stop-color="#e8586a"/><stop offset=".7" stop-color="#cc2585"/><stop offset="1" stop-color="#8a1668"/></radialGradient></defs><ellipse cx="50" cy="36" rx="46" ry="34" fill="url(#sky)"/><circle cx="69" cy="4" r="30" fill="url(#pl)"/><circle cx="11" cy="38" r="6" fill="#3f7890"/><path d="M7 5q8 0 14 8l17 13-5 8-7-2-13-15Q7 11 7 5z" fill="#dedbe6" stroke="#9d97a9"/><path d="M33 24l9-2-3 8zM24 30l-1 6 8-1z" fill="#a79fb3"/><path d="M39 30l10 11-12-7z" fill="#8ee0ff"/><path d="M20 36h1M35 41h2M67 40h1M78 40h2" stroke="#fff" stroke-width="2"/></svg></div>
  <div class="apps">
    <b class="run"><svg viewBox="0 0 30 30"><path d="M1 4h10l2 3h15v18H1z" fill="#ffd45e"/><path d="M1 4h10v4H1z" fill="#d99b1d"/><path d="M5 26V15h20v11h-5v-6H10v6z" fill="#3f92d2"/></svg></b>
    <b><svg viewBox="0 0 30 30"><path d="M1 17C0-3 28-4 29 13c0 6-6 8-11 6 2-6-8-10-17-2z" fill="#3ac5b4"/><path d="M1 17C3 6 15 8 18 13c-6 3-3 14 10 9-8 13-26 9-27-5z" fill="#1767b8"/><path d="M11 1C20-2 29 4 29 13c0 5-5 7-9 6 3-4 0-14-9-18z" fill="#66d855"/><circle cx="8" cy="23" r="7" fill="#c9c9c9"/><circle cx="8" cy="21" r="3" fill="#999"/><path d="M3 28q5-7 10 0z" fill="#999"/></svg></b>
    <b><svg viewBox="0 0 30 30"><path d="M1 12L15 1l14 11v17H1z" fill="#2a9be0"/><path d="M1 12L15 1l14 11-14 12z" fill="#0f5ca6"/><path d="M3 10h24v5L15 24 3 15z" fill="#f6f6f6"/><path d="M1 13l14 10 14-10v16H1z" fill="#2aa4ea"/></svg><u>8</u></b>
    <b class="act"><svg viewBox="0 0 30 30"><path d="M6 1h19v7l-9 1v4h7v5h-7v4l9-1v8H6z" fill="#c47a35"/><path d="M6 1l10 8v13L6 29z" fill="#a9642a"/><path d="M6 1l10 8 9-8M6 29l10-7 9 7" stroke="#8a4d1c" stroke-width=".7" fill="none"/></svg></b>
    <b><svg viewBox="0 0 30 30"><rect x="0" y="0" width="30" height="30" rx="13" fill="#0b5cff"/><text x="4" y="18" font-size="9" font-weight="bold" textLength="22" lengthAdjust="spacingAndGlyphs" fill="#fff">zoom</text></svg></b>
    <b class="run"><svg viewBox="0 0 30 30"><circle cx="15" cy="15" r="14.500" fill="#1ed760"/><path d="M6 10q9-3 18 2M7 15q8-2 15 2M8 20q7-2 13 2" stroke="#111" stroke-width="2.600" fill="none" stroke-linecap="round"/></svg></b>
    <b><svg viewBox="0 0 30 30"><path d="M6 5l18 19M24 5L8 23" stroke="#aaa" stroke-width="3"/><g fill="#1d8ac6"><circle cx="6" cy="5" r="4"/><circle cx="25" cy="5" r="4.500"/><circle cx="8" cy="23" r="7"/><circle cx="25" cy="22" r="4"/></g><circle cx="16" cy="14" r="5" fill="#ccc"/></svg></b>
    <b><svg viewBox="0 0 30 30"><path d="M0 0h30v30H0z" fill="#000"/><path d="M9 5h4l4 12V5h4v20h-4l-4-12v12H9z" fill="#d81f26"/></svg></b>
    <b><svg viewBox="0 0 30 30"><path d="M5 22h20l3 7H2z" fill="#f08a1c"/><path d="M13 1h4l6 23H7z" fill="#f4f0ea"/><path d="M12 6h6l2 5H10.500zM9 16h12l1 5H8z" fill="#f08a1c"/></svg></b>
    <b><svg viewBox="0 0 30 30"><ellipse cx="15" cy="15" rx="14.500" ry="15" fill="#e0162b"/><ellipse cx="15" cy="15" rx="6.500" ry="10.500" fill="#d5e4ed"/></svg></b>
    <b><svg viewBox="0 0 30 30"><path d="M3 9l3-5 3 3q3-6 8-6 12 3 12 16a14 13 0 0 1-28 0q0-5 2-8z" fill="#ff5a36"/><path d="M17 1q12 3 12 16 0 8-8 11 7-12-4-19-2-4 0-8z" fill="#ffc02e"/><circle cx="15" cy="17" r="7.500" fill="#7a3fd6"/><path d="M6 9q8-2 10 2l-5 4q4 4 9 1-3 7-9 5-6-3-5-12z" fill="#ff8a26"/></svg></b>
    <b><svg viewBox="0 0 30 30"><use href="#chrome"/></svg></b>
    <b class="run"><svg viewBox="0 0 30 30"><use href="#chrome"/><circle cx="22" cy="22" r="9" fill="#8f887f"/><path d="M15 28q0-12 7-15 7 1 8 12l-4 5-3-6-5 5z" fill="#3a2f2b"/><circle cx="22" cy="18" r="3" fill="#dcb79f"/></svg></b>
  </div>
  <div class="tray">
    <svg class="cloud" viewBox="0 0 32 26"><path d="M7 25a7 7 0 0 1 0-14Q9 2 17 2q8 0 9 9a7 7 0 0 1-1 14z" fill="#a3c4f5" stroke="#84aae8"/><path d="M7 25a7 7 0 0 1 2-13q6 0 8 5 9-2 12 5-1 3-4 3z" fill="#c9defc" stroke="none"/></svg>
    <span class="wx">13°C&nbsp; Cloudy</span>
    <svg class="trayic" viewBox="0 0 110 24" stroke="#111" stroke-width="1.300"><path d="M2 17l8-9 8 9"/><path d="M35 6h9v12h-9zM44 10l4-2v8l-4-2M35 3q5-3 10 0M35 21q5 3 10 0"/><path d="M60 4h20v13H60M67 21h8M71 17v4M60 17v5M59 4h4v6h-4z"/><path d="M90 9h3l4-4v14l-4-4h-3zM101 9l6 6M107 9l-6 6"/></svg>
    <span class="lang">ENG</span>
    <span class="clock">09:32<br>01-02-2024</span>
    <svg class="note" viewBox="0 0 34 34"><path d="M2 4h20v16h-9l-5 5v-5H2z" fill="#000" stroke="none"/><path d="M6 9h12M6 12.500h12M6 16h8" stroke="#fff"/><circle cx="22" cy="23" r="10" fill="#d4d4d4" stroke="#777"/><text x="18" y="29" font-size="14.500" fill="#000" stroke="none">3</text></svg>
  </div>
</footer>
</div>

<svg class="defs" viewBox="0 0 24 24"><defs>
  <g id="lens"><circle cx="10.500" cy="10.500" r="7.500" fill="#eee" stroke="#777" stroke-width="1.300"/><path d="M16 16l6 6" stroke="#555" stroke-width="2.500"/></g>
  <g id="rt"><path d="M4 4h9v9l7 7" stroke="#1a88dc" stroke-width="1.800"/><circle cx="5" cy="4" r="3" fill="#1eb04e" stroke="none"/><circle cx="20" cy="19" r="3" fill="#1eb04e" stroke="none"/></g>
  <g id="bolt"><path d="M10 10L2 17h4l-2 6 8-7H8z" fill="#777" stroke="none"/></g>
  <g id="plus"><path d="M2 17h10M7 12v10" stroke="#1eb04e" stroke-width="3"/></g>
  <g id="dim"><path d="M4 7h16" stroke-width="2"/><path d="M2 7l5-3v6zM22 7l-5-3v6z" stroke-width="1"/></g>
  <g id="tag"><path d="M2 4l8-2 12 12-8 8L3 11z"/><circle cx="7" cy="6.500" r="1.700"/><path d="M9 11l6 6M11 8l7 7M8 13l4 4"/></g>
  <g id="fusion"><rect width="16" height="16" rx="2" fill="#f3a82c"/><path d="M4 5.500h7.500M11.500 3v5.500M8 5.500v4.500M5 11.500h7" stroke="#3c3c3c" stroke-width="2.200" fill="none"/></g>
  <g id="chrome"><circle cx="15" cy="15" r="14.500" fill="#34a353"/><path d="M2.500 7.500A14.500 14.500 0 0 1 27.500 7.500L15 15z" fill="#e33b2e"/><path d="M2.500 7.500h25L15 10z" fill="#e33b2e"/><path d="M27.500 7.500A14.500 14.500 0 0 1 14 29.500l7-12-2-10z" fill="#fcc934"/><circle cx="15" cy="15" r="7.200" fill="#fff"/><circle cx="15" cy="15" r="5.500" fill="#2f78ea"/></g>
</defs></svg>
<script src="grid.js"></script>
</body>
</html>
```
FILE: styles.css
```css
*{box-sizing:border-box}
body{margin:0;background:#eee;font:12px "Noto Sans","DejaVu Sans",sans-serif;color:#3c3c3c;overflow:hidden}
.defs{position:absolute;width:0;height:0}
svg{display:block;flex:none}
.app{width:1920px;height:1080px;display:flex;flex-direction:column}
h1,p,ul{margin:0;padding:0;font-weight:normal}
.titlebar{height:29px;background:#fff;display:flex;align-items:center;color:#000;padding-bottom:1px}
.brd{width:19px;height:21px;margin-left:2px}
h1{font:14.6px "Open Sans",sans-serif;letter-spacing:-.145px;margin-left:6px;white-space:nowrap}
.winctl{width:150px;height:28px;margin-left:auto;margin-right:20px}
.menubar{height:36px;background:#cbcbcb;border-bottom:1px solid #bababa;display:flex;align-items:center;gap:10px;padding:0 0 0 4px;font-size:13.5px;letter-spacing:-.4px}
.toolbar{display:flex;align-items:center;white-space:nowrap}
.toolbar b,.palette b{position:relative;width:35px;height:31px;display:flex;align-items:center;justify-content:center;flex:none}
.toolbar b svg,.palette b svg{width:24px;height:24px;fill:none;stroke:#444}
.palette svg,.toolbar svg{fill:none;stroke:#444}
.dd::after,.combo::after{content:"";position:absolute;right:1px;bottom:-1px;border:3px solid transparent;border-top:5px solid #555;border-bottom:0}
.main{height:39px;background:#d9d9d9;border-bottom:1px solid #999}
.grip{width:4px;height:36px;margin:0 5px 0 7.500px;border:solid #bcbcbc;border-width:0 1px;flex:none}
.sep{width:9px;height:36px;flex:none;background:linear-gradient(#bbb,#bbb) center/1px 100% no-repeat}
.g2{margin:0 13px 0 8px}
.tg{font-size:9px;font-weight:bold;fill:#fff;stroke:none}
.tiny{width:13px;height:13px}
.two{font-size:8.800px;line-height:8.800px;font-weight:600;letter-spacing:-.35px;width:55px;margin-left:4px}
.tiny.pq{width:14px;margin:0}
.two+.tiny.pq{margin-left:-5px}
.params{height:41px;background:#eee;border-bottom:1px solid #d2d2d2;padding-top:2px}
.params .w33{width:33px}
.params b{width:33px}
.toolbar .on{width:31px;background:#d9d9d9;border-radius:2px}
.toolbar b.on+b{margin-left:1px}
.params .sep{width:10px;background-position:center}
label{display:block;letter-spacing:0;font-size:12.200px}
.l1{width:52px;padding-left:8px}
.combo{position:relative;height:26px;background:#fff;border:1px solid #999;display:flex;align-items:center;padding-left:7px;flex:none;color:#333}
.combo::after{right:5px;bottom:10px}
.combo svg{width:22px;height:22px}
.combo em{width:20px;height:20px;background:#38aae0;border:1px solid #3090c0;margin:0 6px 0 -3px}
.c1{width:113px}
.c2{width:55px;padding-left:4px}.c3{width:111px}.c4{width:55px;margin-left:4px;padding-left:4px}
.params .s2{width:14px}.params .s3{width:10px;margin-left:1px}.params .s4{width:9px}
.l2{width:59px;padding-left:11px}.l3,.l4{padding-left:11px}.l3{width:44px}.l4{width:75px}
.params .s5{width:17px}.l5{width:52px;padding-left:3px}
.work{flex:1;display:flex;min-height:0;height:860px}
.palette{width:70px;border-left:1px solid #d0d0d0;display:grid;grid-template-columns:33px 33px;grid-auto-rows:max-content;padding-left:.5px}
.palette b{width:33px;height:33px}
.palette b.on{background:#d9d9d9;width:29px;height:29px;margin:2px}
.palette .dd::after{right:-1px;bottom:2px}
.palette svg{width:24px}
.pgrip{grid-column:1/3;height:6px;margin:7px 8px 3.500px 7px;border:solid #ccc;border-width:1px 0}
.palette hr{grid-column:1/3;width:66px;height:2px;margin:0;border:0;background:#ccc}
.palette .chev{grid-column:1/3;width:14px;height:12px;margin:17px 0 0 26px}
.r2{font:bold 9.500px "Liberation Sans",sans-serif;stroke:none}
.panel{width:373px;display:flex;flex-direction:column}
.tabs{height:30px;display:flex;gap:4px;padding-left:2px;color:#888;font-size:12px}
.tabs span{background:#d9d9d9;height:29px;display:flex;align-items:center;justify-content:center}
.t1{width:102px}.t2{width:68px}
.tabs .t3{width:96px;height:31px;background:none;color:#1593d4;border-bottom:3px solid #1593d4;z-index:1;padding-bottom:0}
.pbody{flex:1;border:1px solid #85888c;display:flex;flex-direction:column;min-height:0}
.cap{height:21px;line-height:15px;padding-left:1px;flex:none}
.c-lay{height:27px;line-height:27px;padding:0}
.list{border:1px solid #85888c;background:#fff;padding:1px;display:flex;margin-right:1px;flex:none}
.types{height:253px}
ul{list-style:none;width:351px;background:#0795d9;color:#fff;overflow:hidden;padding-bottom:0}
li{height:20px;display:flex;align-items:center;padding-left:3px;gap:5.500px;white-space:nowrap}
li svg{width:16px;height:16px;fill:none}
li em{width:16px;height:16px;background:#7394b6;border:1px solid #5c86ac}
li em.top{background:#96506e}li em.bot{background:#2a98e0}li em.pad{background:#2caaa0}li em.unr{background:#96ba84}li em.dmn{background:#a8b484}
li em.dots{border-color:#7fc0ea;background:radial-gradient(#5a9fd8 .7px,transparent 1px) 0 0/3px 3px,#b4daf8}
li em.rd{border-color:#a06088;background-color:#cdd0f0}li em.gr{border-color:#7fd0d8;background-color:#a8dcea}
.sb{position:relative;flex:1;background:#eee}
.sb::before{content:"";position:absolute;left:5px;top:0;width:6px;height:198px;background:#808080;border-radius:3px;z-index:1}
.sb::after,.vs::after{content:"";position:absolute;left:0;right:0;top:198px;bottom:0;background:conic-gradient(#fff 25%,#e8e8e8 0 50%,#fff 0 75%,#e8e8e8 0) 0 0/2px 2px}
.presets{height:123px;border:1px solid #85888c;background:#fff;padding:1px;margin:0 1px 6px 0;flex:none}
.presets p{height:16px;line-height:16px;padding-left:4px}
.presets p:nth-child(even){background:#f3f3f3}
.layers{height:370px}
.layers .sb::before{height:313px}.layers .sb::after{top:313px}
.reset{align-self:flex-end;width:49px;height:26px;margin-top:2px;border:1px solid #85888c;border-radius:4px;background:#fdfdfd;font:inherit;color:inherit;padding:0}
.editor{flex:1;display:flex;flex-direction:column;margin-left:4px}
.cmd{height:34px;display:flex;padding:4px 4px 0 7px;align-items:flex-start;letter-spacing:.15px}
.cmd span{width:132px;line-height:27px}
.input{flex:1;border-color:#2a8cb4;box-shadow:0 0 0 1px #dff3f8}
.stage{position:relative;display:grid;grid-template-columns:1457px 16px;grid-template-rows:810px 16px}
.board{width:1457px;height:810px;grid-row:1;grid-column:1}
.board text{font-family:"Liberation Sans",Arial,sans-serif;fill:#9a9a9a}
.trace{fill:none;stroke:#2a9ad4;stroke-opacity:.87;stroke-width:3px;stroke-linejoin:round}
.board .mark text{font-family:"DejaVu Serif",serif;font-weight:400;fill:#c3c3c3;stroke:#c3c3c3;stroke-width:9px;stroke-linejoin:miter}
.side{position:absolute;left:1427px;top:9px;display:flex;flex-direction:column;gap:15px}
.side div{width:27px;height:146px;background:#444;display:flex;flex-direction:column;align-items:center;padding-top:8px;gap:7px}
.side .fu{padding-top:19px;gap:10px}
.side svg{width:16px;height:16px;fill:none}
.side span{writing-mode:vertical-rl;color:#fff;font:bold 11.500px "Noto Sans",sans-serif;letter-spacing:-.1px}
.tip{position:absolute;left:1324px;top:137px;width:111px;height:28px;background:#6b6b6b;color:#fff;font:15px/26px "Open Sans",sans-serif;padding-left:6px;letter-spacing:-.42px;box-shadow:1px 1px 2px #555}
.vs{grid-row:1;grid-column:2;position:relative;background:#eee}
.vs::before{content:"";position:absolute;left:5px;top:1px;width:6px;height:527px;border-radius:3px;background:#808080}
.vs::after{top:529px}
.hs{grid-row:2;grid-column:1;position:relative;background:conic-gradient(#fff 25%,#e8e8e8 0 50%,#fff 0 75%,#e8e8e8 0) 0 0/2px 2px}
.hs::before{content:"";position:absolute;left:392px;width:1008px;top:0;bottom:0;background:linear-gradient(#eee 5px,#808080 5px 11px,#eee 11px)}
.status{height:25px;border-top:1px solid #85888c;background:#eee;display:flex;align-items:center;justify-content:space-between;padding-left:2px;white-space:nowrap;letter-spacing:-.045px}
.status svg{width:52px;height:24px;fill:none;margin-right:0}
.taskbar{height:50px;display:flex;background:linear-gradient(90deg,#cdf0ef,#d3e7ef 30%,#d4e0ec 70%,#d5dbe9);color:#111;font-family:"Open Sans",sans-serif}
.start{width:60px;display:grid;place-items:center}
.start svg{width:20px}
.search{width:360px;background:#fff;border:1px solid #ccc;display:flex;align-items:center;font-size:18px;color:#333;padding-left:14px;position:relative;white-space:nowrap}
.search svg{width:21px;height:21px;fill:none}
.search span{margin-left:14px;letter-spacing:-.25px}
.search .space{width:96px;height:48px;margin-left:auto;overflow:hidden}
.apps{display:flex;margin-left:3px}
.apps b{width:62.050px;position:relative;display:grid;place-items:center}
.apps b>svg{width:30px;height:30px}
.apps .run::after{content:"";position:absolute;bottom:0;left:5px;right:5px;height:3px;background:#0a78d4}
.apps .act{background:linear-gradient(#eef6fb,#eef6fb) 1px 0/57px 47px no-repeat,linear-gradient(#0a78d4,#0a78d4) 1px 47px/61px 3px no-repeat}
.apps u{position:absolute;left:37px;top:24px;width:20px;height:20px;border-radius:50%;background:#d8dfe3;border:1px solid #777;text-decoration:none;font:15px/18px "Open Sans",sans-serif;text-align:center}
.tray{flex:1;display:flex;align-items:center;font-size:16.500px;white-space:nowrap;letter-spacing:-.5px;padding-left:200px}
.tray svg{fill:none}
.cloud{width:32px;height:26px}
.wx{margin-left:8px;width:132px;letter-spacing:.15px}
.trayic{width:110px;height:24px}
.lang{font-size:14.500px;margin-left:13px;width:39px}
.clock{font-size:14.500px;line-height:23px;text-align:center;width:84px}
.note{width:34px;height:34px;margin-left:17px}
```
FILE: grid.js
```js
// 50 mil grid, 17.78 px per step, anchored on the resistor axis.
(function () {
  var step = 17.78, d = "", i, p;
  for (i = -42; i < 40; i++) {
    p = Math.floor(1194.3 + i * step) + 0.5;
    if (p > 447 && p < 1904) d += "M" + p + " 179V989";
  }
  for (i = -23; i < 23; i++) {
    p = Math.floor(581.3 + i * step) + 0.5;
    if (p > 179 && p < 989) d += "M447 " + p + "H1904";
  }
  document.getElementById("grid").setAttribute("d", d);
})();
```
